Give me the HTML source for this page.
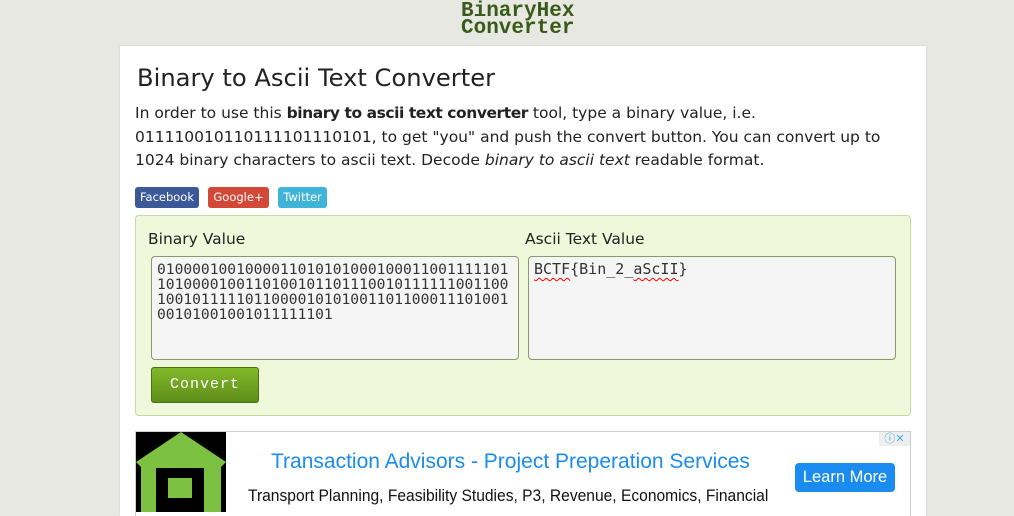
<!DOCTYPE html>
<html><head><meta charset="utf-8"><style>
*{box-sizing:border-box;margin:0;padding:0}
body{width:1014px;height:507px;overflow:hidden;background:#e8e8e3;font-family:"DejaVu Sans","Liberation Sans",sans-serif;color:#222;position:relative}
.logo{position:absolute;left:461px;top:3px;font-family:"Liberation Mono",monospace;font-weight:bold;font-size:21px;line-height:17px;color:#3a5a1a}
.wrap{position:absolute;left:120px;top:46px;width:806px;height:470px;background:#fff;box-shadow:0 0 2px #ccc;overflow:hidden}
h1{position:absolute;left:17px;top:18px;font-weight:normal;font-size:24.2px;color:#222}
.desc{position:absolute;left:15px;top:56px;width:780px;font-size:15.5px;line-height:23.5px;color:#222}
.desc b{letter-spacing:-0.45px}
.btn{position:absolute;top:141px;height:21px;border-radius:3px;color:#fff;font-size:11.5px;line-height:21px;text-align:center}
.box{position:absolute;left:15px;top:169px;width:776px;height:201px;background:#eff8db;border:1px solid #c9d9a2;border-radius:4px}
.lbl{position:absolute;top:14px;font-size:15.5px;color:#222}
.ta{position:absolute;top:40px;width:368px;height:104px;background:#f5f5f5;border:1px solid #8a9a6a;border-radius:4px;font-family:"DejaVu Sans Mono","Liberation Mono",monospace;font-size:14.6px;line-height:15px;padding:5px 5px;color:#333;white-space:nowrap;overflow:hidden}
.conv{position:absolute;left:15px;top:151px;width:108px;height:36px;background:linear-gradient(#82b92a,#5f8e1a);border:1px solid #4a6e12;border-radius:3px;color:#fff;font-family:"Liberation Mono",monospace;font-size:15px;line-height:34px;text-align:center;letter-spacing:1px}
.sq{text-decoration:underline wavy red;text-decoration-thickness:1px;text-underline-offset:3px}
.ad{position:absolute;left:15px;top:385px;width:776px;height:100px;border:1px solid #ccc;background:#fff}
</style></head><body>
<div class="logo">BinaryHex<br>Converter</div>
<div class="wrap">
<h1>Binary to Ascii Text Converter</h1>
<div class="desc">In order to use this <b>binary to ascii text converter</b> tool, type a binary value, i.e. 011110010110111101110101, to get "you" and push the convert button. You can convert up to 1024 binary characters to ascii text. Decode <i>binary to ascii text</i> readable format.</div>
<div class="btn" style="left:15px;width:64px;background:#3b5998">Facebook</div>
<div class="btn" style="left:88px;width:61px;background:#d34836">Google+</div>
<div class="btn" style="left:158px;width:49px;background:#3fb4d8">Twitter</div>
<div class="box">
<div class="lbl" style="left:12px">Binary Value</div>
<div class="lbl" style="left:389px">Ascii Text Value</div>
<div class="ta" style="left:15px">0100001001000011010101000100011001111101<br>1010000100110100101101110010111111001100<br>1001011111011000010101001101100011101001<br>00101001001011111101</div>
<div class="ta" style="left:392px;font-size:15px"><span class="sq">BCTF</span>{Bin_2_<span class="sq">aScII</span>}</div>
<div class="conv">Convert</div>
</div>
<div class="ad">
<svg style="position:absolute;left:0;top:0" width="90" height="80" viewBox="0 0 90 80"><rect width="90" height="80" fill="#000"/><polygon points="0,30 45,0 90,30 85,35 85,80 5,80 5,35" fill="#7dc142"/><rect x="20" y="36" width="48" height="44" fill="#000"/><rect x="32" y="46" width="24" height="20" fill="#7dc142"/></svg>
<div style="position:absolute;left:135px;top:18px;font-family:'Liberation Sans',sans-serif;font-size:21px;color:#1a8cf0">Transaction Advisors - Project Preperation Services</div>
<div style="position:absolute;left:112px;top:55px;font-family:'Liberation Sans',sans-serif;font-size:16.5px;color:#111;transform:scaleX(0.945);transform-origin:left">Transport Planning, Feasibility Studies, P3, Revenue, Economics, Financial</div>
<div style="position:absolute;left:659px;top:31px;width:100px;height:29px;background:#1a8cf0;border-radius:4px;color:#fff;font-family:'Liberation Sans',sans-serif;font-size:16.5px;line-height:29px;text-align:center">Learn More</div>
<div style="position:absolute;right:0;top:0;width:31px;height:14px;background:#eee;color:#3ab0e0;font-size:11px;line-height:14px;text-align:center">ⓘ✕</div>
</div>
</div>
</body></html>
